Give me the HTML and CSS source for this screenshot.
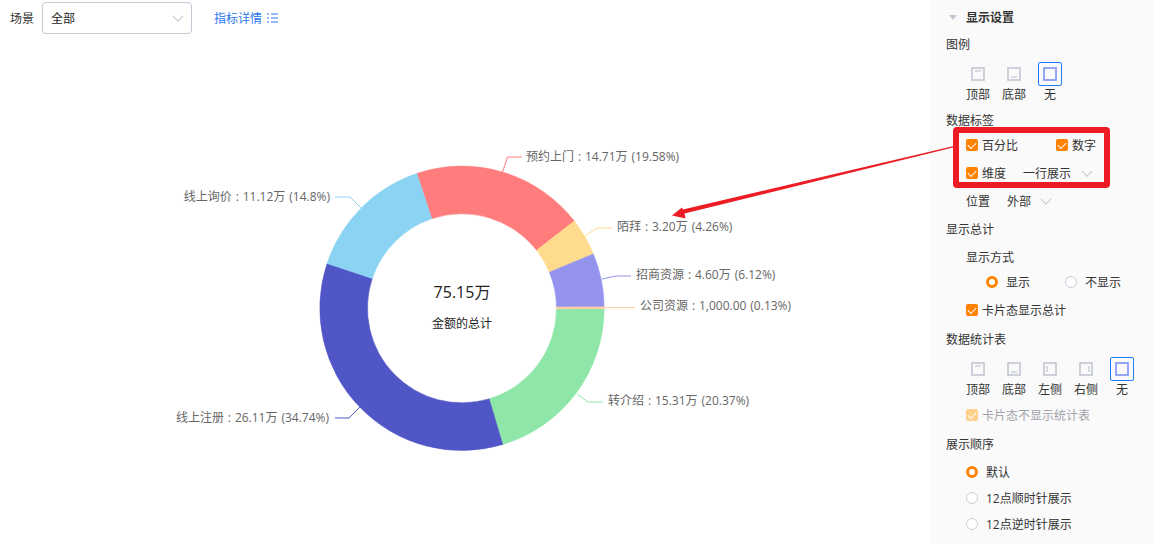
FILE: index.html
```html
<!DOCTYPE html>
<html lang="en">
<head>
    <meta charset="UTF-8">
    <title>显示设置</title>
    <link rel="stylesheet" href="styles.css">
</head>
<body>
<div class="page">
    <div class="main">
        <div class="toolbar">
            <span class="toolbar-label">场景</span>
            <div class="select">
                <span>全部</span>
                <svg class="chevron" width="12" height="7" viewBox="0 0 14 8"><path d="M1 1l6 6 6-6"/></svg>
            </div>
            <a class="detail-link">指标详情
                <svg width="11" height="10" viewBox="0 0 11 10"><path d="M0 1h2M4 1h7M0 5h2M4 5h7M0 9h2M4 9h7"/></svg>
            </a>
        </div>
        <svg class="chart" width="930" height="498" viewBox="0 46 930 498">
            <!-- slices, clockwise from 3 o'clock -->
            <g id="slices"></g>
            <path class="leader" stroke="#ff7c7c" d="M502.5 172L507.5 157H522"/>
            <path class="leader" stroke="#8bd3f2" d="M361 208L350 197H335"/>
            <path class="leader" stroke="#ffdb8e" d="M585 236L597 228H612"/>
            <path class="leader" stroke="#9494ef" d="M602 279L616 276H631"/>
            <path class="leader" stroke="#ffcfa8" d="M604 307.5H635"/>
            <path class="leader" stroke="#8ee6a8" d="M577 394L588 402H603"/>
            <path class="leader" stroke="#5156c6" d="M360 407L349 418H335"/>
            <text class="label" x="526" y="161">预约上门 : 14.71万 (19.58%)</text>
            <text class="label" x="330" y="201" text-anchor="end">线上询价 : 11.12万 (14.8%)</text>
            <text class="label" x="617" y="231">陌拜 : 3.20万 (4.26%)</text>
            <text class="label" x="636" y="279">招商资源 : 4.60万 (6.12%)</text>
            <text class="label" x="640" y="310">公司资源 : 1,000.00 (0.13%)</text>
            <text class="label" x="608" y="405">转介绍 : 15.31万 (20.37%)</text>
            <text class="label" x="329" y="422" text-anchor="end">线上注册 : 26.11万 (34.74%)</text>
            <text class="total" x="462" y="298" text-anchor="middle">75.15万</text>
            <text class="total-name" x="462" y="328" text-anchor="middle">金额的总计</text>
        </svg>
    </div>

    <div class="panel">
        <div class="panel-title"><i class="caret"></i>显示设置</div>

        <div class="group-title legend-title">图例</div>
        <div class="pos-row">
            <div class="pos"><svg class="pos-icon" viewBox="0 0 14 14"><rect x="1" y="1" width="12" height="12"/><path d="M4 4h6"/></svg><span>顶部</span></div>
            <div class="pos"><svg class="pos-icon" viewBox="0 0 14 14"><rect x="1" y="1" width="12" height="12"/><path d="M4 10h6"/></svg><span>底部</span></div>
            <div class="pos active"><svg class="pos-icon" viewBox="0 0 14 14"><rect x="1" y="1" width="12" height="12"/></svg><span>无</span></div>
        </div>

        <div class="group-title labels-title">数据标签</div>
        <div class="check-row first">
            <label class="check"><i class="box"></i>百分比</label>
            <label class="check number"><i class="box"></i>数字</label>
        </div>
        <div class="check-row">
            <label class="check"><i class="box"></i>维度</label>
            <span class="inline-select">一行展示<svg class="chevron" width="12" height="7" viewBox="0 0 14 8"><path d="M1 1l6 6 6-6"/></svg></span>
        </div>
        <div class="check-row position">
            <span>位置</span>
            <span class="inline-select">外部<svg class="chevron" width="12" height="7" viewBox="0 0 14 8"><path d="M1 1l6 6 6-6"/></svg></span>
        </div>

        <div class="group-title total-title">显示总计</div>
        <div class="sub-title">显示方式</div>
        <div class="radio-row">
            <label class="radio on"><i class="dot"></i>显示</label>
            <label class="radio off"><i class="dot"></i>不显示</label>
        </div>
        <div class="check-row card-check">
            <label class="check"><i class="box"></i>卡片态显示总计</label>
        </div>

        <div class="group-title table-title">数据统计表</div>
        <div class="pos-row">
            <div class="pos"><svg class="pos-icon" viewBox="0 0 14 14"><rect x="1" y="1" width="12" height="12"/><path d="M4 4h6"/></svg><span>顶部</span></div>
            <div class="pos"><svg class="pos-icon" viewBox="0 0 14 14"><rect x="1" y="1" width="12" height="12"/><path d="M4 10h6"/></svg><span>底部</span></div>
            <div class="pos"><svg class="pos-icon" viewBox="0 0 14 14"><rect x="1" y="1" width="12" height="12"/><path d="M4 4v6"/></svg><span>左侧</span></div>
            <div class="pos"><svg class="pos-icon" viewBox="0 0 14 14"><rect x="1" y="1" width="12" height="12"/><path d="M10 4v6"/></svg><span>右侧</span></div>
            <div class="pos active"><svg class="pos-icon" viewBox="0 0 14 14"><rect x="1" y="1" width="12" height="12"/></svg><span>无</span></div>
        </div>
        <div class="check-row disabled-check">
            <label class="check disabled"><i class="box"></i>卡片态不显示统计表</label>
        </div>

        <div class="group-title order-title">展示顺序</div>
        <label class="radio on order first-order"><i class="dot"></i>默认</label>
        <label class="radio off order"><i class="dot"></i>12点顺时针展示</label>
        <label class="radio off order"><i class="dot"></i>12点逆时针展示</label>
    </div>

    <!-- annotation drawn on top of the screenshot -->
    <div class="red-box"></div>
    <svg class="arrow" width="1154" height="544" viewBox="0 0 1154 544">
        <path d="M954 146L954 147.2L684.5 213.5L685.5 218.5L672 215.5L682 207.5L683 209.5Z" fill="#ed1c24"/>
    </svg>
</div>
<script>
var data = [
    { pct: 0.13, color: '#ffcfa8', stroke: 1.4 },
    { pct: 20.37, color: '#8ee6a8', stroke: 0.5 },
    { pct: 34.74, color: '#5156c6', stroke: 0.5 },
    { pct: 14.8, color: '#8bd3f2', stroke: 0.5 },
    { pct: 19.58, color: '#ff7c7c', stroke: 0.5 },
    { pct: 4.26, color: '#ffdb8e', stroke: 0.5 },
    { pct: 6.12, color: '#9494ef', stroke: 0.5 }
];
var cx = 462, cy = 308.3, outer = 142.2, inner = 94.5;
var group = document.getElementById('slices');
var angle = 0;

function point(r, deg) {
    var rad = deg * Math.PI / 180;
    return (cx + r * Math.cos(rad)).toFixed(2) + ' ' + (cy + r * Math.sin(rad)).toFixed(2);
}

function slicePath(from, to) {
    var large = to - from > 180 ? 1 : 0;
    return 'M' + point(outer, from) + 'A' + outer + ' ' + outer + ' 0 ' + large + ' 1 ' + point(outer, to) +
        'L' + point(inner, to) + 'A' + inner + ' ' + inner + ' 0 ' + large + ' 0 ' + point(inner, from) + 'Z';
}

// the thin first slice sits just above the axis and is painted last
for (var i = 1; i <= data.length; i++) {
    var item = data[i % data.length];
    var from = i === data.length ? -0.47 : angle;
    var to = i === data.length ? 0 : angle + item.pct * 3.6;
    var path = document.createElementNS('http://www.w3.org/2000/svg', 'path');
    path.setAttribute('d', slicePath(from, to));
    path.setAttribute('fill', item.color);
    path.setAttribute('stroke', item.color);
    path.setAttribute('stroke-width', item.stroke);
    group.appendChild(path);
    angle = to;
}
</script>
</body>
</html>
```

FILE: styles.css
```css
* {
    box-sizing: border-box;
}

body {
    margin: 0;
    background: #fff;
    color: #333;
    font-family: "Open Sans", "Noto Sans CJK SC", sans-serif;
    font-size: 12px;
}

.page {
    position: relative;
    display: flex;
    width: 1154px;
    height: 544px;
    overflow: hidden;
}

/* toolbar and chart */
.main {
    width: 930px;
    flex-shrink: 0;
}

.toolbar {
    display: flex;
    align-items: center;
    height: 46px;
    padding: 0 0 10px 10px;
}

.toolbar-label {
    margin-right: 8px;
}

.select {
    display: flex;
    align-items: center;
    justify-content: space-between;
    width: 150px;
    height: 32px;
    padding: 0 7px 0 8px;
    border: 1px solid #c4c8d4;
    border-radius: 4px;
    color: #222;
}

.chevron {
    fill: none;
    stroke: #c8ccd6;
    stroke-width: 1.4;
}

.detail-link {
    display: flex;
    align-items: center;
    gap: 5px;
    margin-left: 22px;
    color: #2a74f0;
}

.detail-link svg {
    fill: none;
    stroke: #2a74f0;
}

.chart {
    display: block;
}

.leader {
    fill: none;
    stroke-width: 1;
}

.label {
    fill: #666;
    font-size: 12px;
    word-spacing: 0.8px;
}

.total {
    fill: #222;
    font-size: 16px;
}

.total-name {
    fill: #222;
    font-size: 12px;
}

/* settings panel */
.panel {
    flex: 1;
    padding-left: 16px;
    background: #fafafa;
    color: #333;
}

.panel-title {
    display: flex;
    align-items: center;
    height: 18px;
    margin-top: 8px;
    font-weight: bold;
}

.caret {
    width: 0;
    height: 0;
    margin: 0 9px 0 3px;
    border: 4px solid transparent;
    border-top: 5px solid #c4c8d4;
    border-bottom: 0;
}

.group-title {
    line-height: 18px;
}

.legend-title {
    margin-top: 10px;
}

.pos-row {
    display: flex;
    margin-top: 8px;
    padding-left: 14px;
}

.pos {
    display: flex;
    flex-direction: column;
    align-items: center;
    width: 36px;
    line-height: 16px;
}

.pos span {
    margin-top: 1px;
}

.pos-icon {
    width: 24px;
    height: 24px;
    padding: 4px;
    border: 1px solid transparent;
    border-radius: 2px;
    fill: none;
    stroke: #c8ccd8;
    stroke-width: 1.8;
}

.pos-icon path {
    stroke: #b8bcc8;
    stroke-width: 1;
}

.pos.active .pos-icon {
    border-color: #1e7dfa;
    stroke: #8b9cf5;
}

.labels-title {
    margin-top: 9px;
}

.check-row {
    display: flex;
    align-items: center;
    height: 18px;
    padding-left: 20px;
}

.check-row.first {
    margin-top: 6px;
}

.check-row + .check-row {
    margin-top: 10px;
}

.check {
    display: flex;
    align-items: center;
}

.check.number {
    margin-left: 38px;
}

.box {
    position: relative;
    width: 12px;
    height: 12px;
    margin-right: 4px;
    border-radius: 2px;
    background: #ff8200;
}

.box::after {
    content: "";
    position: absolute;
    left: 2px;
    top: 2.5px;
    width: 7px;
    height: 4px;
    border-left: 1.5px solid #fff;
    border-bottom: 1.5px solid #fff;
    transform: rotate(-45deg);
}

.check.disabled {
    color: #a0a3ab;
}

.check.disabled .box {
    background: #ffcf8c;
}

.inline-select {
    display: flex;
    align-items: center;
    gap: 10px;
    margin-left: 17px;
}

.check-row.position .inline-select {
    margin-left: 17px;
    gap: 9px;
}

.total-title {
    margin-top: 11px;
}

.sub-title {
    margin-top: 10px;
    padding-left: 20px;
    line-height: 18px;
}

.radio-row {
    display: flex;
    margin-top: 6px;
    padding-left: 40px;
    height: 18px;
}

.radio {
    display: flex;
    align-items: center;
}

.radio.off {
    margin-left: 35px;
}

.dot {
    width: 12px;
    height: 12px;
    margin-right: 8px;
    border-radius: 50%;
    border: 1px solid #c8ccd8;
    background: #fff;
}

.radio.on .dot {
    border: 3px solid #ff8200;
}

.check-row.card-check {
    margin-top: 10px;
}

.table-title {
    margin-top: 12px;
}

.check-row.disabled-check {
    margin-top: 8px;
}

.order-title {
    margin-top: 12px;
}

.radio.order {
    height: 18px;
    margin: 8px 0 0 20px;
}

.radio.first-order {
    margin-top: 9px;
}

/* annotation */
.red-box {
    position: absolute;
    left: 953px;
    top: 127px;
    width: 157px;
    height: 61px;
    border: 6px solid #ed1c24;
    border-radius: 4px;
}

.arrow {
    position: absolute;
    left: 0;
    top: 0;
    pointer-events: none;
}
```
